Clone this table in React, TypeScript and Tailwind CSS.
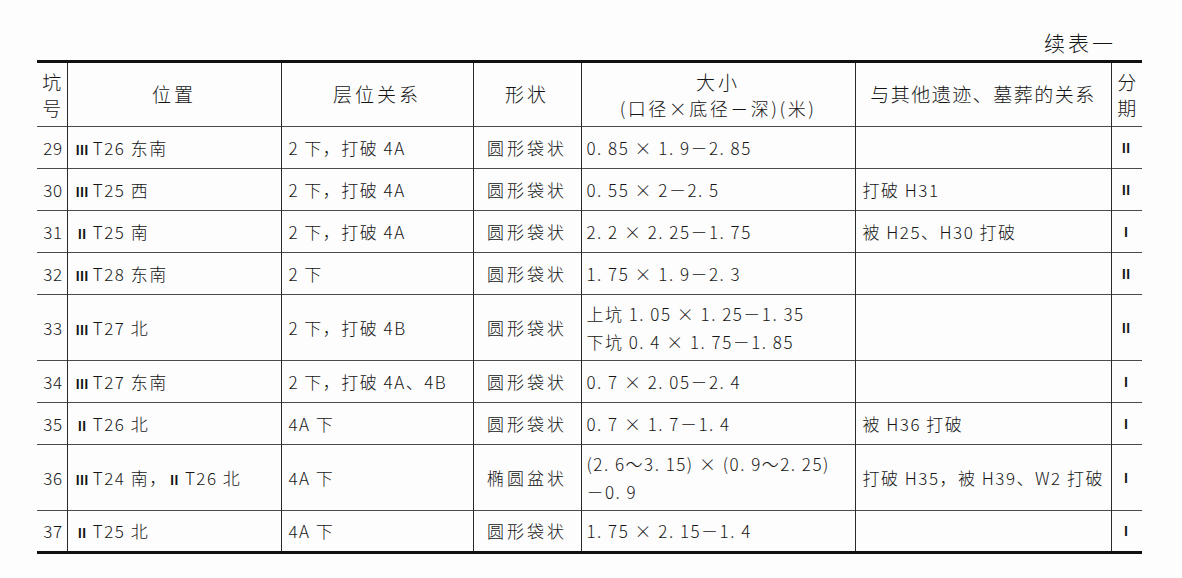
import React from "react";

type Row = {
  no: string;
  pos: string;
  layer: string;
  shape: string;
  size: string[];
  relation: string;
  phase: string;
  tall?: boolean;
};

const rows: Row[] = [
  { no: "29", pos: "Ⅲ T26 东南", layer: "2 下，打破 4A", shape: "圆形袋状", size: ["0. 85 × 1. 9－2. 85"], relation: "", phase: "Ⅱ" },
  { no: "30", pos: "Ⅲ T25 西", layer: "2 下，打破 4A", shape: "圆形袋状", size: ["0. 55 × 2－2. 5"], relation: "打破 H31", phase: "Ⅱ" },
  { no: "31", pos: "Ⅱ T25 南", layer: "2 下，打破 4A", shape: "圆形袋状", size: ["2. 2 × 2. 25－1. 75"], relation: "被 H25、H30 打破", phase: "Ⅰ" },
  { no: "32", pos: "Ⅲ T28 东南", layer: "2 下", shape: "圆形袋状", size: ["1. 75 × 1. 9－2. 3"], relation: "", phase: "Ⅱ" },
  {
    no: "33",
    pos: "Ⅲ T27 北",
    layer: "2 下，打破 4B",
    shape: "圆形袋状",
    size: ["上坑 1. 05 × 1. 25－1. 35", "下坑 0. 4 × 1. 75－1. 85"],
    relation: "",
    phase: "Ⅱ",
    tall: true
  },
  { no: "34", pos: "Ⅲ T27 东南", layer: "2 下，打破 4A、4B", shape: "圆形袋状", size: ["0. 7 × 2. 05－2. 4"], relation: "", phase: "Ⅰ" },
  { no: "35", pos: "Ⅱ T26 北", layer: "4A 下", shape: "圆形袋状", size: ["0. 7 × 1. 7－1. 4"], relation: "被 H36 打破", phase: "Ⅰ" },
  {
    no: "36",
    pos: "Ⅲ T24 南，Ⅱ T26 北",
    layer: "4A 下",
    shape: "椭圆盆状",
    size: ["(2. 6～3. 15) × (0. 9～2. 25)", "－0. 9"],
    relation: "打破 H35，被 H39、W2 打破",
    phase: "Ⅰ",
    tall: true
  },
  { no: "37", pos: "Ⅱ T25 北", layer: "4A 下", shape: "圆形袋状", size: ["1. 75 × 2. 15－1. 4"], relation: "", phase: "Ⅰ" }
];

const cell = "border-l border-[#2a2a2a] align-middle";

// the roman numeral before a trench number is set small and heavy in the scan
function Pos({ text }: { text: string }) {
  const parts = text.split(/([ⅠⅡⅢ])/);
  return (
    <>
      {parts.map((p, i) =>
        /[ⅠⅡⅢ]/.test(p) ? (
          <span key={i} className="text-[13px] font-bold tracking-[-1px]">
            {p}
          </span>
        ) : (
          <span key={i}>{p}</span>
        )
      )}
    </>
  );
}

export default function App() {
  return (
    <div
      className="min-h-[578px] w-[1182px] bg-[#fdfdfd] text-[#151515]"
      style={{ fontFamily: '"Noto Sans CJK SC", "Noto Sans", sans-serif' }}
    >
      <div className="ml-[37px] w-[1105px] pt-[29px]">
        <div className="flex justify-end pr-[26px] text-[21px] leading-[26px] tracking-[3px] font-light">续表一</div>

        <table className="mt-[5px] w-[1105px] table-fixed border-collapse text-[17px] font-light tracking-[1.5px]">
          <colgroup>
            <col className="w-[30px]" />
            <col className="w-[214px]" />
            <col className="w-[192px]" />
            <col className="w-[108px]" />
            <col className="w-[274px]" />
            <col className="w-[256px]" />
            <col className="w-[31px]" />
          </colgroup>
          <thead>
            <tr className="h-[65px] border-t-[3px] border-b border-t-[#111] border-b-[#4a4a4a] text-[19px] tracking-[3px]">
              <th className="align-middle text-center font-light leading-[26px] tracking-normal">
                <div>坑</div>
                <div>号</div>
              </th>
              <th className={`${cell} text-center font-light`}>位置</th>
              <th className={`${cell} text-center font-light`}>层位关系</th>
              <th className={`${cell} text-center font-light`}>形状</th>
              <th className={`${cell} text-center font-light leading-[26px]`}>
                <div>大小</div>
                <div className="text-[18px] tracking-[2.5px]">(口径×底径－深)(米)</div>
              </th>
              <th className={`${cell} text-center font-light tracking-[1.5px]`}>与其他遗迹、墓葬的关系</th>
              <th className={`${cell} text-center font-light leading-[26px] tracking-normal`}>
                <div>分</div>
                <div>期</div>
              </th>
            </tr>
          </thead>
          <tbody>
            {rows.map((r, i) => (
              <tr
                key={r.no}
                className={`${r.tall ? "h-[66px]" : "h-[42px]"} ${
                  i === rows.length - 1 ? "border-b-[3px] border-b-[#111]" : "border-b border-b-[#4a4a4a]"
                }`}
              >
                <td className="pr-[4px] text-right align-middle tracking-[0.5px]">{r.no}</td>
                <td className={`${cell} pl-[8px] whitespace-nowrap`}>
                  <Pos text={r.pos} />
                </td>
                <td className={`${cell} pl-[7px] whitespace-nowrap`}>{r.layer}</td>
                <td className={`${cell} text-center tracking-[3px]`}>{r.shape}</td>
                <td className={`${cell} pl-[5px] leading-[28px] whitespace-nowrap`}>
                  {r.size.map((s) => (
                    <div key={s}>{s}</div>
                  ))}
                </td>
                <td className={`${cell} pl-[7px] whitespace-nowrap`}>{r.relation}</td>
                <td className={`${cell} text-center text-[13px] font-bold`}>{r.phase}</td>
              </tr>
            ))}
          </tbody>
        </table>
      </div>
    </div>
  );
}
